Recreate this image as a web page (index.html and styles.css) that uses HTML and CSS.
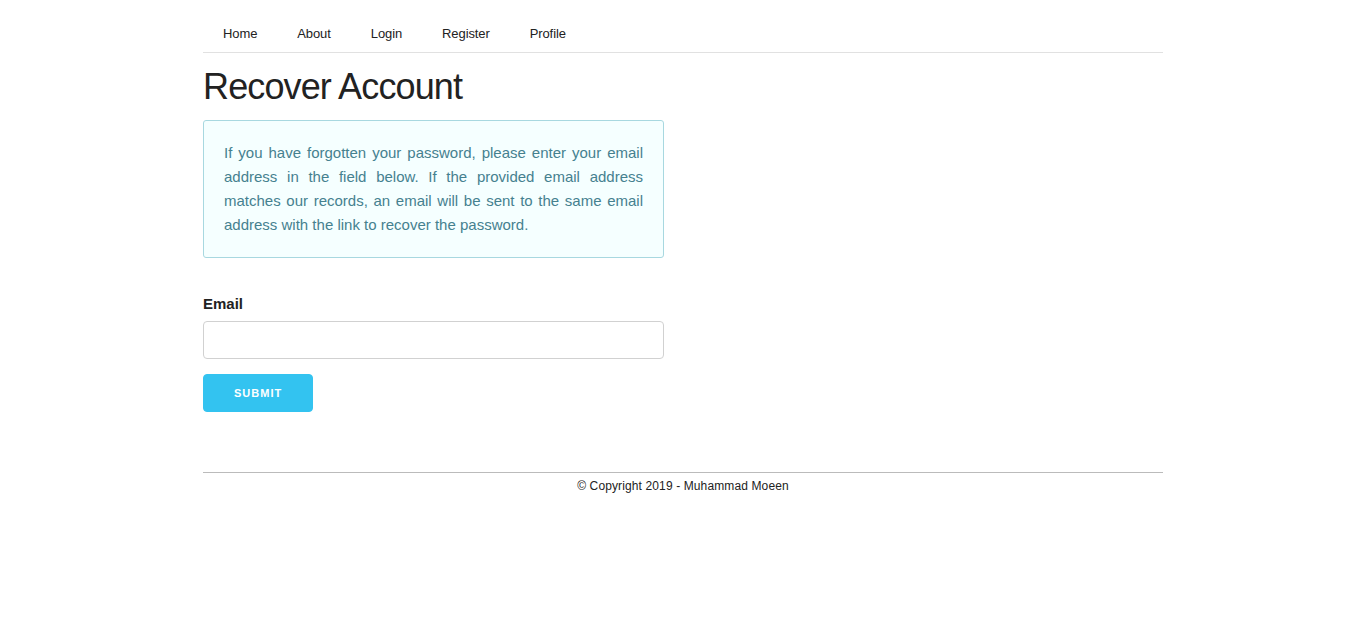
FILE: index.html
```html
<!DOCTYPE html>
<html lang="en">
<head>
<meta charset="utf-8">
<title>Recover Account</title>
<link rel="stylesheet" href="styles.css">
</head>
<body>
<div class="container">
  <nav class="nav">
    <a class="nav-link" href="#">Home</a>
    <a class="nav-link" href="#">About</a>
    <a class="nav-link" href="#">Login</a>
    <a class="nav-link" href="#">Register</a>
    <a class="nav-link" href="#">Profile</a>
  </nav>
  <h2 class="title">Recover Account</h2>
  <div class="half">
    <div class="info">If you have forgotten your password, please enter your email address in the field below. If the provided email address matches our records, an email will be sent to the same email address with the link to recover the password.</div>
    <form class="form">
      <label class="label" for="email">Email</label>
      <input class="input" id="email" type="email">
      <button class="btn" type="button">Submit</button>
    </form>
  </div>
  <footer class="footer">© Copyright 2019 - Muhammad Moeen</footer>
</div>
</body>
</html>
```
FILE: styles.css
```css
html, body {
  margin: 0;
  padding: 0;
  background: #fff;
}
body {
  font-family: "Liberation Sans", Arial, sans-serif;
  font-size: 15px;
  line-height: 24px;
  color: #222;
}
.container {
  width: 960px;
  margin: 0 auto;
  padding-top: 15px;
}
.nav {
  display: flex;
  border-bottom: 1px solid #e1e1e1;
}
.nav-link {
  padding: 0 20px;
  line-height: 37px;
  font-size: 13px;
  letter-spacing: -0.1px;
  color: #222;
  text-decoration: none;
}
.title {
  margin: 11px 0 11px;
  font-size: 36px;
  line-height: 45px;
  font-weight: 300;
  letter-spacing: -0.87px;
  color: #222;
}
.half {
  width: 461px;
}
.info {
  border: 1px solid #a8d8e0;
  border-radius: 3px;
  background: #f5ffff;
  color: #45818f;
  padding: 20px;
  text-align: justify;
}
.form {
  display: flex;
  flex-direction: column;
  align-items: flex-start;
  margin-top: 34px;
}
.label {
  font-weight: 700;
  margin-bottom: 5px;
  color: #222;
}
.input {
  box-sizing: border-box;
  width: 461px;
  height: 38px;
  padding: 6px 10px;
  border: 1px solid #d1d1d1;
  border-radius: 4px;
  margin: 0 0 15px;
  background: #fff;
  font: inherit;
}
.btn {
  height: 38px;
  padding: 0 30px;
  border: 1px solid #33c3f0;
  border-radius: 4px;
  background: #33c3f0;
  color: #fff;
  font-family: "Liberation Sans", Arial, sans-serif;
  font-size: 11px;
  font-weight: 700;
  letter-spacing: 1px;
  text-transform: uppercase;
  line-height: 36px;
  margin: 0 0 15px;
  cursor: pointer;
}
.footer {
  margin-top: 45px;
  border-top: 1px solid #bbb;
  padding-top: 4px;
  text-align: center;
  font-size: 12px;
  line-height: 18px;
  letter-spacing: 0.12px;
  color: #222;
}
```
